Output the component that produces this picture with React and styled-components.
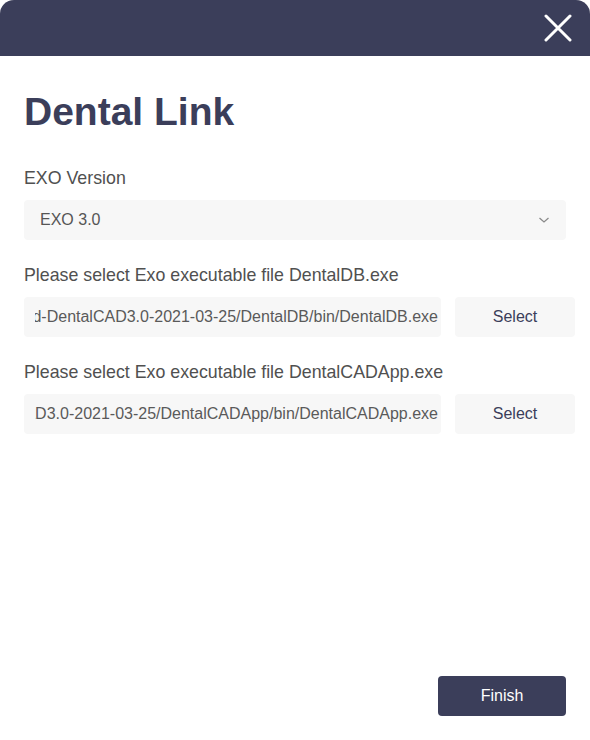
import React, { useState } from "react"
import styled, { createGlobalStyle } from "styled-components"

const GlobalStyle = createGlobalStyle`
  html, body {
    margin: 0;
    padding: 0;
    background: #ffffff;
  }
  body {
    font-family: "Liberation Sans", Arial, sans-serif;
  }
`

const Dialog = styled.div`
  width: 590px;
  height: 740px;
  background: #ffffff;
  display: flex;
  flex-direction: column;
  box-sizing: border-box;
`

const Header = styled.div`
  height: 56px;
  background-color: #3b3e5a;
  border-radius: 14px 14px 0 0;
  display: flex;
  align-items: center;
  justify-content: flex-end;
  padding-right: 17px;
  flex-shrink: 0;
`

const CloseButton = styled.button`
  width: 30px;
  height: 30px;
  border: none;
  padding: 0;
  background: transparent;
  display: flex;
  align-items: center;
  justify-content: center;
  cursor: pointer;
`

const Body = styled.div`
  flex: 1;
  display: flex;
  flex-direction: column;
  padding: 34px 15px 24px 24px;
`

const Title = styled.h1`
  margin: 0 0 34px;
  font-size: 39px;
  line-height: 44px;
  font-weight: 700;
  color: #3b3e5a;
`

const Label = styled.div`
  font-size: 17.8px;
  line-height: 20px;
  color: #505050;
  margin-bottom: 12px;
`

const Field = styled.div`
  display: flex;
  gap: 14px;
  margin-bottom: 25px;
`

const SelectBox = styled.div`
  height: 40px;
  width: 542px;
  box-sizing: border-box;
  background: #f7f7f7;
  border-radius: 4px;
  display: flex;
  align-items: center;
  justify-content: space-between;
  padding: 0 16px;
  font-size: 16px;
  color: #555555;
`

const PathBox = styled.div`
  height: 40px;
  width: 417px;
  box-sizing: border-box;
  background: #f7f7f7;
  border-radius: 4px;
  display: flex;
  align-items: center;
  padding: 0 3px 0 11px;
`

const PathText = styled.div`
  flex: 1;
  overflow: hidden;
  white-space: nowrap;
  display: flex;
  justify-content: flex-end;
  font-size: 16px;
  color: #5a5a5a;
`

const SelectButton = styled.button`
  width: 120px;
  height: 40px;
  border: none;
  border-radius: 4px;
  background: #f7f7f7;
  font-family: inherit;
  font-size: 16px;
  color: #3b3e5a;
  cursor: pointer;
`

const Footer = styled.div`
  margin-top: auto;
  display: flex;
  justify-content: flex-end;
  padding-right: 9px;
`

const FinishButton = styled.button`
  width: 128px;
  height: 40px;
  border: none;
  border-radius: 4px;
  background: #3b3e5a;
  color: #ffffff;
  font-family: inherit;
  font-size: 16px;
  cursor: pointer;
`

const CloseIcon = () => (
  <svg width="28" height="28" viewBox="0 0 28 28">
    <path d="M2 2 L26 26 M26 2 L2 26" stroke="#ffffff" strokeWidth="3" strokeLinecap="round" />
  </svg>
)

const Chevron = () => (
  <svg width="12" height="8" viewBox="0 0 12 8">
    <path d="M1.5 2 L6 6 L10.5 2" stroke="#8a8a8a" strokeWidth="1.3" fill="none" />
  </svg>
)

export default function App() {
  const [version] = useState("EXO 3.0")
  const [dbPath] = useState("C:/exocad/exocad-DentalCAD3.0-2021-03-25/DentalDB/bin/DentalDB.exe")
  const [appPath] = useState("C:/exocad/exocad-DentalCAD3.0-2021-03-25/DentalCADApp/bin/DentalCADApp.exe")

  return (
    <>
      <GlobalStyle />
      <Dialog>
        <Header>
          <CloseButton aria-label="close">
            <CloseIcon />
          </CloseButton>
        </Header>
        <Body>
          <Title>Dental Link</Title>

          <Label>EXO Version</Label>
          <Field>
            <SelectBox>
              <span>{version}</span>
              <Chevron />
            </SelectBox>
          </Field>

          <Label>Please select Exo executable file DentalDB.exe</Label>
          <Field>
            <PathBox>
              <PathText><span>{dbPath}</span></PathText>
            </PathBox>
            <SelectButton>Select</SelectButton>
          </Field>

          <Label>Please select Exo executable file DentalCADApp.exe</Label>
          <Field>
            <PathBox>
              <PathText><span>{appPath}</span></PathText>
            </PathBox>
            <SelectButton>Select</SelectButton>
          </Field>

          <Footer>
            <FinishButton>Finish</FinishButton>
          </Footer>
        </Body>
      </Dialog>
    </>
  )
}
